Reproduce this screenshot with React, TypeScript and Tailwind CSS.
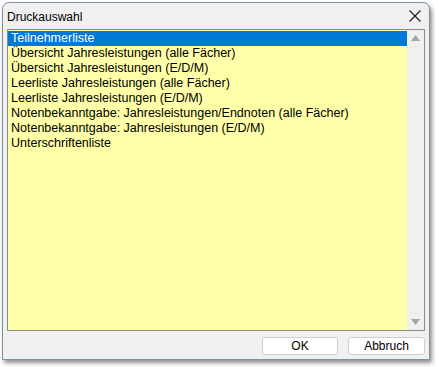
import React from 'react';

const items = [
  'Teilnehmerliste',
  'Übersicht Jahresleistungen (alle Fächer)',
  'Übersicht Jahresleistungen (E/D/M)',
  'Leerliste Jahresleistungen (alle Fächer)',
  'Leerliste Jahresleistungen (E/D/M)',
  'Notenbekanntgabe: Jahresleistungen/Endnoten (alle Fächer)',
  'Notenbekanntgabe: Jahresleistungen (E/D/M)',
  'Unterschriftenliste',
];

const App: React.FC = () => {
  const [selected, setSelected] = React.useState(0);

  return (
    <div className="w-[439px] h-[367px] bg-white pt-[2px] pl-[2px] font-['Liberation_Sans',Arial,sans-serif] text-[12px] text-black">
      <div className="w-[428px] h-[358px] bg-[#f0f0f0] border border-[#7d8ea5] rounded-t-[7px] shadow-[2px_3px_4px_rgba(0,0,0,0.45)] flex flex-col">
        {/* title bar */}
        <div className="h-[26px] flex items-center justify-between pl-[4px] pr-[6px]">
          <span className="pt-[1px]">Druckauswahl</span>
          <svg width="14" height="14" viewBox="0 0 14 14" className="mr-[1px]">
            <path d="M1.5 1.5 L12.5 12.5 M12.5 1.5 L1.5 12.5" stroke="#1a1a1a" strokeWidth="1.1" fill="none" />
          </svg>
        </div>

        {/* list box */}
        <div className="ml-[4px] w-[418px] h-[302px] border border-[#8a8a8a] bg-[#ffffaa] flex">
          <div className="flex-1 pt-[1px] text-[12.5px]">
            {items.map((it, i) => (
              <div
                key={it}
                onClick={() => setSelected(i)}
                className={`h-[15px] leading-[15px] pl-[3px] whitespace-nowrap cursor-default ${
                  i === selected ? 'bg-[#0078d7] text-white' : ''
                }`}
              >
                {it}
              </div>
            ))}
          </div>
          <div className="w-[17px] bg-[#f0f0f0] flex flex-col justify-between items-center py-[5px]">
            <svg width="9" height="6" viewBox="0 0 9 6">
              <path d="M0 6 L4.5 0 L9 6 Z" fill="#a3a3a3" />
            </svg>
            <svg width="9" height="6" viewBox="0 0 9 6">
              <path d="M0 0 L4.5 6 L9 0 Z" fill="#a3a3a3" />
            </svg>
          </div>
        </div>

        {/* buttons */}
        <div className="flex justify-end gap-[10px] pr-[4px] mt-[6px]">
          <button className="w-[76px] h-[18px] bg-white border border-[#cfcfcf] rounded-[3px] text-[12px] leading-[16px]">
            OK
          </button>
          <button className="w-[77px] h-[18px] bg-white border border-[#cfcfcf] rounded-[3px] text-[12px] leading-[16px]">
            Abbruch
          </button>
        </div>
      </div>
    </div>
  );
};

export default App;
